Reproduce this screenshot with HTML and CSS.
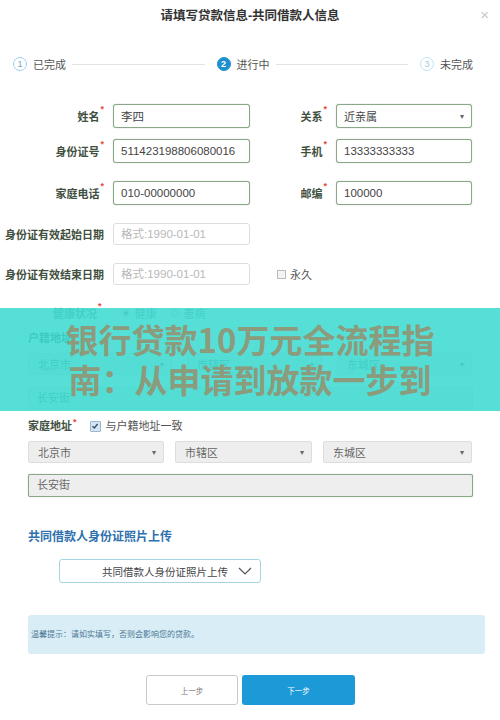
FILE: index.html
```html
<!DOCTYPE html>
<html lang="zh-CN">
<head>
    <meta charset="UTF-8">
    <meta name="viewport" content="width=device-width, initial-scale=1.0">
    <title>共同借款人信息</title>
    <link rel="stylesheet" href="styles.css">
</head>
<body>

    <div class="dialog">
        <div class="dialog-header">
            <h1>请填写贷款信息-共同借款人信息</h1>
            <span class="close">×</span>
        </div>

        <div class="steps">
            <div class="step done"><span class="num">1</span>已完成</div>
            <div class="step-line"></div>
            <div class="step active"><span class="num">2</span>进行中</div>
            <div class="step-line"></div>
            <div class="step todo"><span class="num">3</span>未完成</div>
        </div>

        <form class="form">
            <div class="row">
                <label class="lbl">姓名<i>*</i></label>
                <input class="inp" type="text" value="李四">
                <label class="lbl">关系<i>*</i></label>
                <div class="inp select">近亲属<span class="caret">▾</span></div>
            </div>
            <div class="row">
                <label class="lbl">身份证号<i>*</i></label>
                <input class="inp" type="text" value="511423198806080016">
                <label class="lbl">手机<i>*</i></label>
                <input class="inp" type="text" value="13333333333">
            </div>
            <div class="row sp">
                <label class="lbl">家庭电话<i>*</i></label>
                <input class="inp" type="text" value="010-00000000">
                <label class="lbl">邮编<i>*</i></label>
                <input class="inp" type="text" value="100000">
            </div>
            <div class="row sp date-row">
                <label class="lbl">身份证有效起始日期</label>
                <input class="inp date" type="text" placeholder="格式:1990-01-01">
            </div>
            <div class="row sp date-row">
                <label class="lbl">身份证有效结束日期</label>
                <input class="inp date" type="text" placeholder="格式:1990-01-01">
                <label class="forever"><span class="box"></span>永久</label>
            </div>

            <div class="hukou">
                <div class="health">
                    <span class="health-lbl">健康状况<i>*</i></span>
                    <span class="radio on"></span>健康
                    <span class="radio"></span>患病
                </div>
                <div class="addr">
                    <div class="addr-title">户籍地址</div>
                    <div class="selects hk">
                        <div class="sel">北京市<span class="caret">▾</span></div>
                        <div class="sel">市辖区<span class="caret">▾</span></div>
                        <div class="sel">东城区<span class="caret">▾</span></div>
                    </div>
                    <div class="street">长安街</div>
                </div>

                <div class="banner">
                    <p>银行贷款10万元全流程指南：从申请到放款一步到位</p>
                </div>
            </div>

            <div class="addr">
                <div class="addr-title home">
                    家庭地址<i>*</i>
                    <span class="check"><svg width="8" height="8" viewBox="0 0 8 8"><path d="M1.5 4.2 L3.3 6 L6.6 2" fill="none" stroke="#3a4a5a" stroke-width="1.3"/></svg></span>
                    <span class="same">与户籍地址一致</span>
                </div>
                <div class="selects home-sel">
                    <div class="sel">北京市<span class="caret">▾</span></div>
                    <div class="sel">市辖区<span class="caret">▾</span></div>
                    <div class="sel">东城区<span class="caret">▾</span></div>
                </div>
                <div class="street green">长安街</div>

                <h2 class="upload-title">共同借款人身份证照片上传</h2>
                <button type="button" class="upload-btn">共同借款人身份证照片上传
                    <svg width="14" height="8" viewBox="0 0 14 8"><path d="M1 1 L7 7 L13 1" fill="none" stroke="#555" stroke-width="1.2"/></svg>
                </button>

                <div class="tip">温馨提示：请如实填写，否则会影响您的贷款。</div>
            </div>

            <div class="button-container">
                <button type="button" class="prev-button">上一步</button>
                <button type="submit" class="next-button">下一步</button>
            </div>
        </form>
    </div>

</body>
</html>
```

FILE: styles.css
```css
body {
    margin: 0;
    padding: 0;
    background-color: #fff;
    font-family: "Liberation Sans", "Noto Sans CJK SC", sans-serif;
    color: #444;
}

.dialog {
    width: 500px;
    height: 720px;
    overflow: hidden;
}

.dialog-header {
    position: relative;
    height: 32px;
}

.dialog-header h1 {
    margin: 0;
    font-size: 12.5px;
    line-height: 32px;
    text-align: center;
    color: #333;
    font-weight: bold;
}

.close {
    position: absolute;
    top: 7px;
    right: 11px;
    font-size: 15px;
    line-height: 15px;
    color: #c9c9c9;
}

/* 步骤条 */
.steps {
    display: flex;
    align-items: center;
    margin-top: 24px;
    height: 16px;
    padding: 0 27px 0 13px;
}

.step {
    display: flex;
    align-items: center;
    font-size: 11px;
    color: #555;
    white-space: nowrap;
}

.step .num {
    width: 12px;
    height: 12px;
    border-radius: 50%;
    border: 1px solid #9fd0ea;
    color: #6aa7c9;
    font-size: 9px;
    line-height: 12px;
    text-align: center;
    margin-right: 6px;
}

.step.active .num {
    background-color: #1f8fd0;
    border-color: #1f8fd0;
    color: #fff;
    font-weight: bold;
}

.step.todo .num {
    border-color: #c4e3f1;
    color: #9ccbe3;
}

.step-line {
    flex: 1;
    height: 1px;
    background-color: #e3e3e3;
    margin: 0 12px 0 6px;
}

/* 表单 */
.form {
    padding-top: 32px;
}

.row {
    display: grid;
    grid-template-columns: 113px 137px 86px 136px;
    align-items: center;
    height: 24px;
    margin-top: 11px;
}

.row:first-child {
    margin-top: 0;
}

.row.sp {
    margin-top: 18px;
}

.row.date-row {
    height: 22px;
}

.lbl {
    text-align: right;
    padding-right: 9px;
    font-size: 11px;
    font-weight: bold;
    color: #3f4f40;
    white-space: nowrap;
}

.lbl i,
.addr-title i,
.health-lbl i {
    color: #e5483a;
    font-style: normal;
    font-size: 9px;
    vertical-align: top;
    position: relative;
    top: -4px;
    margin-left: 1px;
}

.inp {
    box-sizing: border-box;
    width: 100%;
    height: 24px;
    padding: 0 7px;
    border: 1px solid #8aa887;
    border-radius: 3px;
    box-shadow: 0 0 1px #8aa887;
    font-family: "Liberation Sans", "Noto Sans CJK SC", sans-serif;
    font-size: 11.5px;
    color: #444;
    background-color: #fff;
    outline: none;
}

.select {
    display: flex;
    align-items: center;
    justify-content: space-between;
    font-size: 11px;
}

.caret {
    font-size: 8px;
    color: #666;
}

.inp.date {
    height: 22px;
    border-color: #ddd;
    box-shadow: none;
}

.inp.date::placeholder {
    color: #b8b8b8;
}

.forever {
    display: flex;
    align-items: center;
    padding-left: 27px;
    font-size: 11px;
    color: #555;
}

.forever .box {
    width: 7px;
    height: 7px;
    border: 1px solid #bbb;
    background-color: #f4f4f4;
    margin-right: 4px;
}

/* 户籍 / 广告条 */
.hukou {
    position: relative;
    margin-top: 20px;
}

.health {
    display: flex;
    align-items: center;
    height: 16px;
    padding-left: 53px;
    font-size: 11px;
    color: #777;
}

.health-lbl {
    font-weight: bold;
    color: #6f8070;
    margin-right: 20px;
}

.radio {
    width: 6px;
    height: 6px;
    border-radius: 50%;
    border: 1px solid #bbb;
    margin-right: 5px;
}

.radio.on {
    background: radial-gradient(circle, #777 40%, #fff 45%);
}

.health .radio + .radio,
.health .radio:last-of-type {
    margin-left: 14px;
}

.health .radio.on {
    margin-left: 0;
}

.addr {
    padding: 0 27px 0 28px;
}

.addr-title {
    margin-top: 9px;
    height: 16px;
    line-height: 16px;
    font-size: 11px;
    font-weight: bold;
    color: #3f4f40;
}

.selects {
    display: grid;
    margin-top: 7px;
    height: 22px;
}

.selects.hk {
    grid-template-columns: 144px 135px 135px;
    column-gap: 15px;
}

.selects.home-sel {
    grid-template-columns: 136px 137px 149px;
    column-gap: 11px;
}

.sel {
    display: flex;
    align-items: center;
    justify-content: space-between;
    padding: 0 7px 0 9px;
    border: 1px solid #ddd;
    border-radius: 2px;
    background-color: #eee;
    font-size: 11px;
    color: #666;
}

.street {
    box-sizing: border-box;
    margin-top: 12px;
    height: 22px;
    line-height: 20px;
    padding: 0 8px;
    border: 1px solid #ddd;
    border-radius: 2px;
    background-color: #eee;
    font-size: 11px;
    color: #666;
}

.street.green {
    margin-top: 11px;
    height: 23px;
    line-height: 21px;
    border-color: #8aa887;
    box-shadow: 0 0 1px #8aa887;
}

.banner {
    position: absolute;
    top: 3px;
    left: 0;
    width: 500px;
    height: 103px;
    background-color: rgba(62, 219, 209, 0.88);
    overflow: hidden;
}

.banner p {
    width: 384px;
    max-height: 80px;
    overflow: hidden;
    margin: 11px auto 0;
    font-family: "Noto Sans CJK SC", sans-serif;
    font-size: 33px;
    line-height: 40px;
    font-weight: bold;
    text-align: center;
    color: #8b9b7c;
}

.addr-title.home {
    display: flex;
    align-items: center;
}

.check {
    display: flex;
    align-items: center;
    justify-content: center;
    width: 9px;
    height: 9px;
    margin-left: 13px;
    margin-right: 5px;
    border: 1px solid #9cb8d4;
    border-radius: 1px;
    background-color: #d3e4f3;
}

.same {
    font-weight: normal;
    color: #555;
}

.upload-title {
    margin: 32px 0 0;
    height: 16px;
    line-height: 16px;
    font-size: 12px;
    color: #2f72ad;
}

.upload-btn {
    display: flex;
    align-items: center;
    justify-content: flex-end;
    gap: 10px;
    box-sizing: border-box;
    width: 202px;
    height: 24px;
    margin: 14px 0 0 31px;
    padding: 0 8px 0 0;
    border: 1px solid #a7d3e4;
    border-radius: 3px;
    background-color: #fff;
    font-family: "Liberation Sans", "Noto Sans CJK SC", sans-serif;
    font-size: 10.5px;
    color: #444;
}

.tip {
    box-sizing: border-box;
    width: 457px;
    height: 39px;
    margin-top: 32px;
    padding-left: 3px;
    line-height: 39px;
    border-radius: 3px;
    background-color: #d9edf7;
    font-size: 8px;
    color: #4d7894;
}

.button-container {
    display: flex;
    margin-top: 21px;
    padding-left: 146px;
    gap: 4px;
}

.button-container button {
    height: 30px;
    border-radius: 3px;
    font-family: "Liberation Sans", "Noto Sans CJK SC", sans-serif;
    font-size: 7.5px;
    cursor: pointer;
}

.prev-button {
    width: 92px;
    background-color: #fff;
    border: 1px solid #c9c9c9;
    color: #777;
}

.next-button {
    width: 113px;
    background-color: #1c9ad8;
    border: none;
    color: #fff;
}
```
